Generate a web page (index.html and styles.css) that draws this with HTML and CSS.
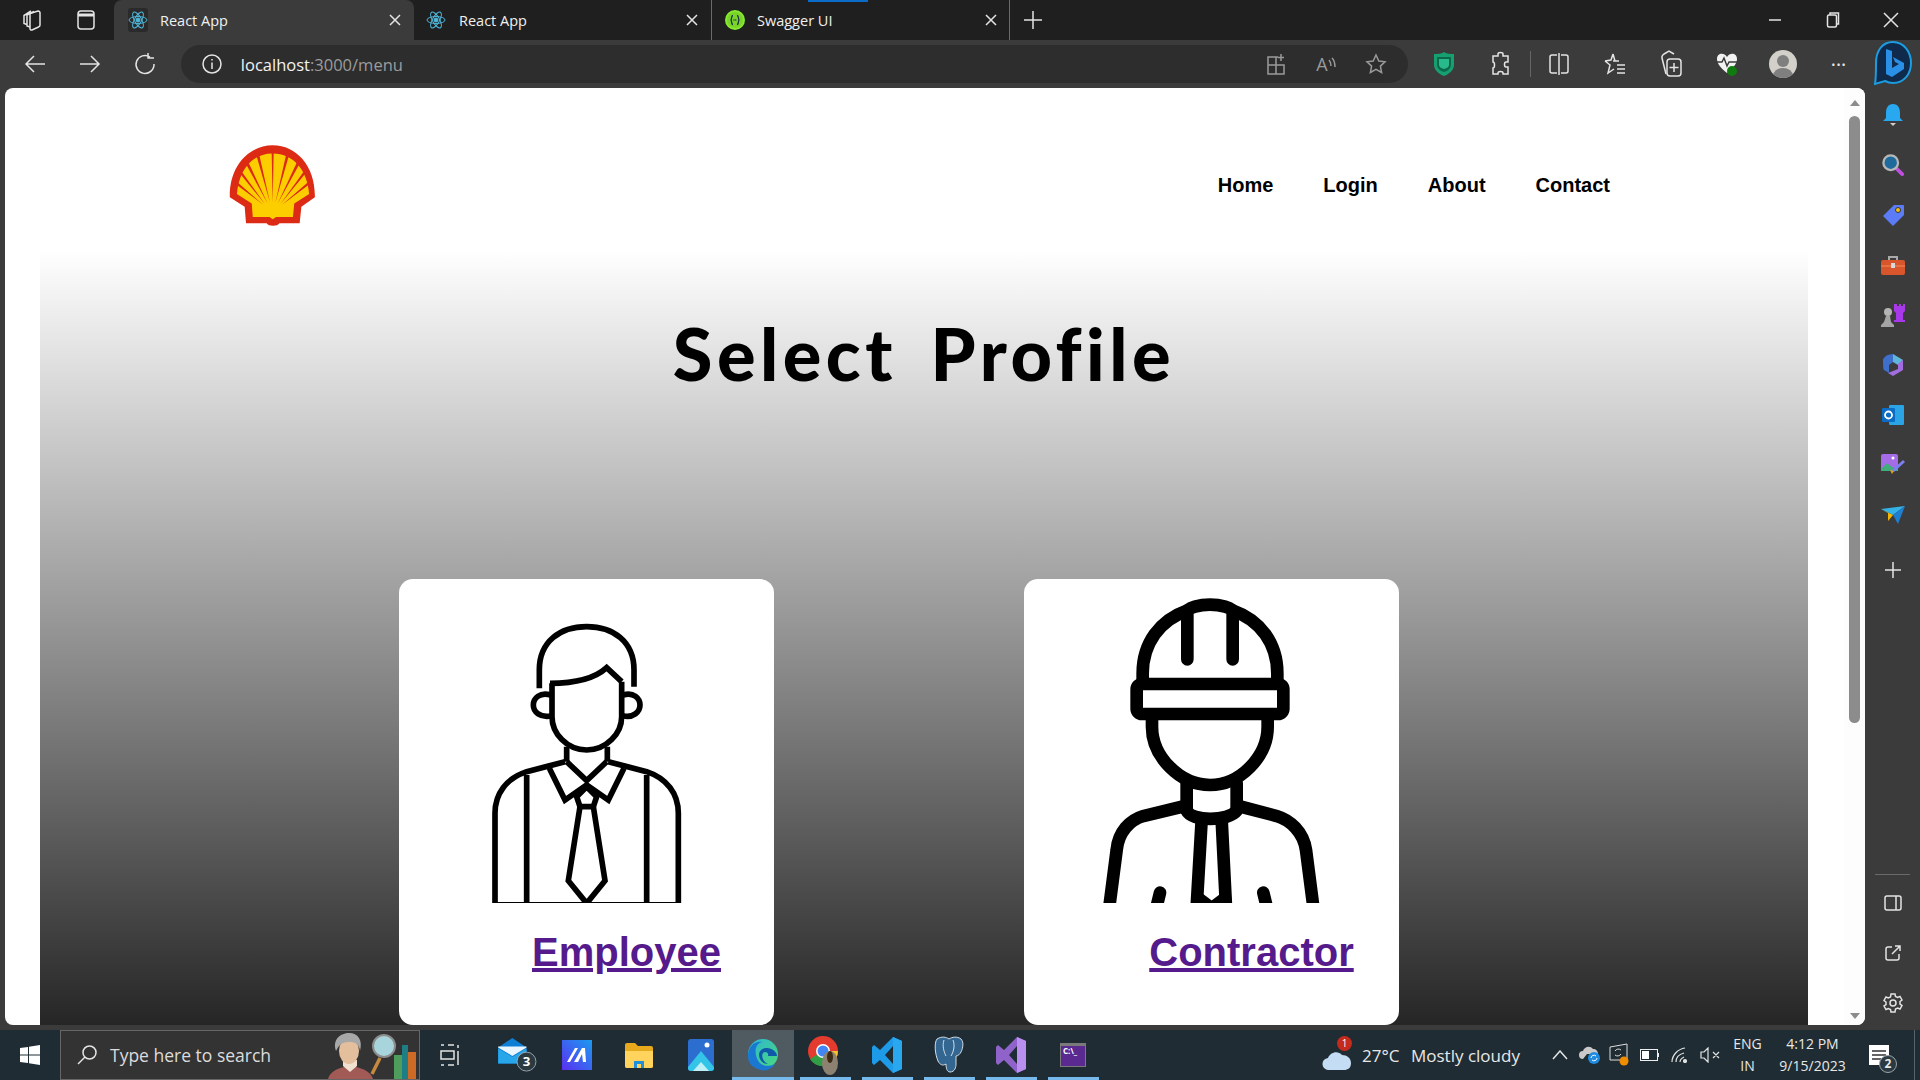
FILE: index.html
```html
<!DOCTYPE html>
<html lang="en">

<head>
    <meta charset="UTF-8">
    <title>React App</title>
    <link rel="stylesheet" href="styles.css">
</head>

<body>

    <!-- Tab strip -->
    <div class="tabbar">
        <div class="strip-btn"><svg width="22" height="22" viewBox="0 0 22 22" class="line"><path d="M9 4.500l8-2.500a2 2 0 0 1 2 1.500V16a2 2 0 0 1-1.500 2L11 21a1.500 1.500 0 0 1-2-1.500z"/><path d="M9 18l-3-1V6l7-3.500M6 15.500l-3-1V6.500L10 2"/></svg></div>
        <div class="strip-btn"><svg width="20" height="22" viewBox="0 0 20 22" class="line"><rect x="2" y="2" width="16" height="18" rx="3"/><path d="M2 6h16" stroke-width="3"/></svg></div>
        <div class="tab tab-active">
            <svg class="favicon favicon-box" viewBox="0 0 20 24"><g class="react"><circle cx="10" cy="12" r="2"/><ellipse cx="10" cy="12" rx="9" ry="3.500"/><ellipse cx="10" cy="12" rx="9" ry="3.500" transform="rotate(60 10 12)"/><ellipse cx="10" cy="12" rx="9" ry="3.500" transform="rotate(120 10 12)"/></g></svg>
            <span class="tab-title">React App</span>
            <svg class="tab-close line" width="12" height="12" viewBox="0 0 12 12"><path d="M1 1l10 10M11 1L1 11"/></svg>
        </div>
        <div class="tab tab-two">
            <svg class="favicon" viewBox="0 0 20 24"><g class="react"><circle cx="10" cy="12" r="2"/><ellipse cx="10" cy="12" rx="9" ry="3.500"/><ellipse cx="10" cy="12" rx="9" ry="3.500" transform="rotate(60 10 12)"/><ellipse cx="10" cy="12" rx="9" ry="3.500" transform="rotate(120 10 12)"/></g></svg>
            <span class="tab-title">React App</span>
            <svg class="tab-close line" width="12" height="12" viewBox="0 0 12 12"><path d="M1 1l10 10M11 1L1 11"/></svg>
        </div>
        <div class="tab tab-three">
            <div class="tab-loading"></div>
            <svg class="favicon" viewBox="0 0 20 20"><circle cx="10" cy="10" r="10" fill="#85ea2d"/><circle cx="10" cy="10" r="8" fill="#7bd32a"/><path d="M8 5.500c-2 0-1 3-2 4.500c1 .5 0 4.500 2 4.500M12 5.500c2 0 1 3 2 4.500c-1 .5 0 4.500-2 4.500" fill="none" stroke="#173647" stroke-width="1.300"/><path d="M8.500 10h3" stroke="#173647" stroke-width="1.300" stroke-dasharray="1 .8"/></svg>
            <span class="tab-title">Swagger UI</span>
            <svg class="tab-close line" width="12" height="12" viewBox="0 0 12 12"><path d="M1 1l10 10M11 1L1 11"/></svg>
        </div>
        <div class="new-tab"><svg width="20" height="20" viewBox="0 0 20 20" class="line"><path d="M10 1v18M1 10h18"/></svg></div>
        <div class="win-controls">
            <div class="win-btn"><svg width="14" height="14" viewBox="0 0 14 14" class="line"><path d="M1 7h12"/></svg></div>
            <div class="win-btn"><svg width="14" height="16" viewBox="0 0 14 16" class="line"><rect x="1.500" y="3" width="9" height="12" rx="1.500"/><path d="M4 3V1h8.500v11h-2"/></svg></div>
            <div class="win-btn"><svg width="16" height="16" viewBox="0 0 16 16" class="line"><path d="M1 1l14 14M15 1L1 15"/></svg></div>
        </div>
    </div>

    <!-- Address bar -->
    <div class="toolbar">
        <div class="tool-btn"><svg width="22" height="22" viewBox="0 0 22 22" class="line"><path d="M21 11H2M10 3l-8 8 8 8"/></svg></div>
        <div class="tool-btn"><svg width="22" height="22" viewBox="0 0 22 22" class="line"><path d="M1 11h19M12 3l8 8-8 8"/></svg></div>
        <div class="tool-btn"><svg width="22" height="24" viewBox="0 0 22 24" class="line"><path d="M16 5a9 9 0 1 0 4 7M14 1v5h6"/></svg></div>
        <div class="address">
            <div class="info-icon"><svg width="20" height="20" viewBox="0 0 20 20" class="line"><circle cx="10" cy="10" r="9"/><path d="M10 8.500V15M10 5v1.500"/></svg></div>
            <span class="url"><span class="url-host">localhost</span>:3000/menu</span>
            <div class="address-icons">
                <div class="addr-btn"><svg width="20" height="22" viewBox="0 0 20 22" class="line dim"><path d="M12 4H2v17h16V12H2M10 4v17M15 1v7M12 4.500h6"/></svg></div>
                <div class="addr-btn"><span class="read-aloud">A</span><svg width="8" height="14" viewBox="0 0 8 14" class="line dim"><path d="M1 3c2 2 2 4 2 6M4 1c3 3 3 6 3 9"/></svg></div>
                <div class="addr-btn"><svg width="22" height="22" viewBox="0 0 22 22" class="line dim"><path d="M11 2l2.800 6 6.200.800-4.600 4.300 1.200 6.400L11 16.400l-5.600 3.100 1.200-6.400L2 8.800 8.200 8z"/></svg></div>
            </div>
        </div>
        <div class="tool-right">
            <div class="ext-btn"><svg width="22" height="26" viewBox="0 0 22 26"><path d="M11 1c3 2 6 2 10 2v11c0 5-5 9-10 11C6 23 1 19 1 14V3c4 0 7 0 10-2z" fill="#15a06f"/><path d="M4 6h14v8c0 3-3 6-7 7-4-1-7-4-7-7z" fill="#0c6a4c"/><path d="M6 8h10v6c0 2-2 3-5 4-3-1-5-2-5-4z" fill="#2ab98a"/></svg></div>
            <div class="ext-btn"><svg width="20" height="26" viewBox="0 0 20 26" class="line"><path d="M8 3c0-2 5-2 5 0v2h5v6h-2c-2 0-2 5 0 5h2v7h-5v-1c0-2-5-2-5 0v1H3v-6c2 0 2-6 0-6V5h5z"/></svg></div>
            <div class="tool-sep"></div>
            <div class="ext-btn"><svg width="20" height="24" viewBox="0 0 20 24" class="line"><path d="M8 3H3a2 2 0 0 0-2 2v14a2 2 0 0 0 2 2h5M12 3h5a2 2 0 0 1 2 2v14a2 2 0 0 1-2 2h-5M10 1v22"/></svg></div>
            <div class="ext-btn"><svg width="22" height="24" viewBox="0 0 22 24" class="line"><path d="M9 2l2 7h-2 6M1 9l5 4-2 8 6-4M13 13h8M13 17h8M13 21h8M9 2L7 8 1 9"/></svg></div>
            <div class="ext-btn"><svg width="22" height="28" viewBox="0 0 22 28" class="line"><path d="M6 24L2 8c-.5-2 .5-3 2-4l5-3 5 3"/><rect x="7" y="9" width="14" height="17" rx="3"/><path d="M14 13v9M9.500 17.500h9"/></svg></div>
            <div class="ext-btn"><svg width="24" height="26" viewBox="0 0 24 26"><path d="M12 22C6 17 2 13 2 8c0-6 7-7 10-2 3-5 10-4 10 2 0 5-4 9-10 14z" fill="#f2f2f2"/><path d="M1 11h6l2-4 3 8 2-4h8" fill="none" stroke="#3b3b3b" stroke-width="1.500"/><circle cx="17" cy="20" r="5" fill="#107c10"/></svg></div>
            <div class="ext-btn"><svg width="28" height="28" viewBox="0 0 28 28"><defs><clipPath id="avatar-clip"><circle cx="14" cy="14" r="14"/></clipPath></defs><g clip-path="url(#avatar-clip)"><rect width="28" height="28" fill="#d3d0ca"/><circle cx="14" cy="11" r="6" fill="#7f7f7f"/><ellipse cx="14" cy="26" rx="10" ry="8" fill="#7f7f7f"/></g></svg></div>
            <div class="ext-btn"><span class="dots">&#8226;&#8226;&#8226;</span></div>
            <div class="bing-btn"><svg width="38" height="46" viewBox="0 0 38 46"><path d="M19 1C8 1 2 10 2 22c0 7 0 15-1 21l10-3c2 1 5 2 8 2 11 0 18-9 18-20S30 1 19 1z" fill="#102a4c" stroke="#1b9de2" stroke-width="2"/><path d="M12 8l6 2v17l7-4-4-2-2-5 11 6v6l-12 8-6-3z" fill="#2a8fe6"/></svg></div>
        </div>
    </div>

    <div class="middle">
        <div class="page">
            <div class="page-scroll">

                <div class="header">
                    <a class="logo" href="#">
                        <svg width="86" height="81" viewBox="85 45 252 240">
                            <path d="M213 46C140 46 84 110 86 200l44 28 4 49h61c5 10 33 10 38 0h60l5-49 40-28C340 110 285 46 213 46z" fill="#dd2a15"/>
                            <path d="M213 70c-62 0-100 50-106 120l44 28 3 40h50l9 7 10-7h50l4-40 44-28c-5-70-46-120-108-120z" fill="#fcce00"/>
                            <path d="M213 215l-3-146h6zM205 215L172 68l-8 5zM198 218L136 85l-8 6zM190 220L115 115l-5 7zM185 222l-78-68-1 9zM221 215l33-147 8 5zM228 218l62-133 8 6zM236 220l75-105 5 7zM241 222l78-68 1 9z" fill="#dd2a15"/>
                        </svg>
                    </a>
                    <div class="nav">
                        <a href="#">Home</a>
                        <a href="#">Login</a>
                        <a href="#">About</a>
                        <a href="#">Contact</a>
                    </div>
                </div>

                <div class="menu-section">
                    <h1>Select Profile</h1>
                    <div class="profile-row">
                        <div class="profile-card">
                            <svg class="profile-img" viewBox="27 27 1125 972">
                                <g class="outline-thin">
                                    <path d="M448 355V300C448 215 510 170 590 170S732 215 732 300V350"/>
                                    <path d="M480 340C550 340 610 330 650 293L695 335"/>
                                    <path d="M486 340V440C486 490 530 540 590 540S695 490 695 440V335"/>
                                    <path d="M482 375C450 365 430 385 430 405S450 445 486 437"/>
                                    <path d="M700 375C730 365 750 385 750 405S730 445 698 437"/>
                                    <path d="M530 530V575M652 530V575"/>
                                    <path d="M525 575L410 605C350 625 315 670 315 730V1010"/>
                                    <path d="M655 575L770 605C830 625 865 670 865 730V1010"/>
                                    <path d="M410 615V1010M770 615V1010"/>
                                    <path d="M530 575L590 632L650 575"/>
                                    <path d="M478 595L525 690L590 645L655 690L702 595"/>
                                    <path d="M590 650L620 680L610 710H570L560 680Z"/>
                                    <path d="M570 710L535 932L590 1000L645 932L610 710"/>
                                    <path d="M310 998H870" stroke-width="4"/>
                                </g>
                            </svg>
                            <a class="profile-link" href="#">Employee</a>
                        </div>
                        <div class="profile-card">
                            <svg class="profile-img" viewBox="42 27 1125 972">
                                <g class="outline-thick">
                                    <path d="M398 340V310C398 220 450 150 530 122M802 340V310C802 220 750 150 670 122"/>
                                    <path d="M532 268V125C532 112 570 104 600 104S668 112 668 125V268"/>
                                    <rect x="380" y="342" width="440" height="90" rx="16"/>
                                    <path d="M426 440V470C426 560 510 645 600 645S773 560 773 470V440"/>
                                    <path d="M530 640V720M680 640V720"/>
                                    <path d="M530 722C545 755 655 755 680 722"/>
                                    <path d="M525 708L400 738C360 750 325 785 320 840L298 1010"/>
                                    <path d="M685 708L800 738C840 750 880 785 888 840L910 1010"/>
                                    <path d="M575 750L560 1010M635 750L648 1010"/>
                                    <path d="M450 968L435 1030M760 968L775 1030"/>
                                    <path d="M565 985L605 1015L645 985"/>
                                </g>
                            </svg>
                            <a class="profile-link" href="#">Contractor</a>
                        </div>
                    </div>
                </div>

            </div>
            <div class="scrollbar">
                <div class="arrow-up"></div>
                <div class="thumb"></div>
                <div class="arrow-down"></div>
            </div>
        </div>

        <!-- Edge sidebar -->
        <div class="sidebar">
            <div class="side-btn"><svg width="20" height="24" viewBox="0 0 20 24"><path d="M10 1c5 0 7 4 7 9v5l3 3H0l3-3v-5c0-5 2-9 7-9z" fill="#27a8f0"/><path d="M7 20h6l-3 3z" fill="#cfcfcf"/></svg></div>
            <div class="side-btn"><svg width="22" height="22" viewBox="0 0 24 24"><path d="M15 15l7 7" stroke="#c04ee0" stroke-width="4" stroke-linecap="round"/><circle cx="9.500" cy="9.500" r="8" fill="#1e6a9c" stroke="#b7b7b7" stroke-width="2.500"/></svg></div>
            <div class="side-btn"><svg width="22" height="22" viewBox="0 0 22 22"><path d="M12 1h9a1 1 0 0 1 1 1v9L11 22 1 12z" fill="#5b7cf6"/><circle cx="16" cy="6" r="2.500" fill="#f4c20d" stroke="#333"/></svg></div>
            <div class="side-btn"><svg width="24" height="20" viewBox="0 0 24 20"><path d="M8 5V2h8v3" fill="none" stroke="#a9a9a9" stroke-width="2"/><rect y="5" width="24" height="15" rx="2" fill="#d9562c"/><path d="M0 11h24" stroke="#f08a5d"/><rect x="10" y="8" width="4" height="5" fill="#d8d8d8"/></svg></div>
            <div class="side-btn"><svg width="24" height="24" viewBox="0 0 24 24"><path d="M13 1h3v2h2V1h2v2h2V1h2v7l-2 2v7h2v2H13v-2h2v-7l-2-2z" fill="#a839e8"/><circle cx="7" cy="9" r="4" fill="#b4b4b4"/><path d="M5 13h4l1 6 3 3v2H0v-2l3-3z" fill="#a4a4a4"/></svg></div>
            <div class="side-btn"><svg width="22" height="24" viewBox="0 0 22 24"><path d="M11 1l10 6-5 5-5-3z" fill="#5fb6d8"/><path d="M21 7v10l-10 6-5-3 10-4v-5z" fill="#a36de0"/><path d="M1 7c0-2 4-6 10-6v8l-4 3v8l-5-3C1 16 1 10 1 7z" fill="#3e6fcb"/></svg></div>
            <div class="side-btn"><svg width="22" height="22" viewBox="0 0 22 22"><rect x="7" y="1" width="15" height="20" rx="1" fill="#2aa4e4"/><rect y="4" width="13" height="14" rx="1" fill="#0a6cc4"/><circle cx="6.500" cy="11" r="3.500" fill="none" stroke="#fff" stroke-width="1.800"/></svg></div>
            <div class="side-btn"><svg width="26" height="24" viewBox="0 0 26 24"><rect x="1" y="1" width="17" height="17" rx="2" fill="#a66be6"/><path d="M1 16l6-6 5 4 6 2v2H1z" fill="#3fae7a"/><circle cx="13" cy="5" r="1.500" fill="#fff"/><path d="M13 18L24 8" stroke="#7c7ff0" stroke-width="3"/><path d="M10 17l4 1-2 3z" fill="#e6a21a"/></svg></div>
            <div class="side-btn"><svg width="24" height="18" viewBox="0 0 24 18"><path d="M0 3l24-3-12 9z" fill="#34b3e8"/><path d="M24 0l-7 18-5-9z" fill="#1e7fd0"/><path d="M0 3l7 4 0 8 5-6z" fill="#f4b400"/></svg></div>
            <div class="side-btn side-plus"><svg width="16" height="16" viewBox="0 0 16 16" class="line"><path d="M8 0v16M0 8h16"/></svg></div>
            <div class="side-spacer"></div>
            <div class="side-divider"></div>
            <div class="side-btn"><svg width="18" height="16" viewBox="0 0 18 16" class="line"><rect x="1" y="1" width="16" height="14" rx="2"/><path d="M12 1v14"/></svg></div>
            <div class="side-btn"><svg width="16" height="16" viewBox="0 0 16 16" class="line"><path d="M7 2H3a2 2 0 0 0-2 2v9a2 2 0 0 0 2 2h9a2 2 0 0 0 2-2V9M7 9l8-8M10 1h5v5"/></svg></div>
            <div class="side-btn"><svg width="20" height="20" viewBox="0 0 20 20" class="line"><circle cx="10" cy="10" r="3"/><path d="M8 1h4l.500 2.500 2.200 1 2.300-1 2 3.500-2 1.500v2.500l2 1.500-2 3.500-2.300-1-2.200 1L12 19H8l-.500-2.500-2.200-1-2.300 1-2-3.500 2-1.500V9L1 7.500 3 4l2.300 1 2.200-1z"/></svg></div>
        </div>
    </div>

    <!-- Windows taskbar -->
    <div class="taskbar">
        <div class="start"><svg width="20" height="20" viewBox="0 0 20 20"><path d="M0 3l8-1v7.500H0zM9 1.800L20 0v9.500H9zM0 10.500h8V18l-8-1zM9 10.500h11V20L9 18.200z" fill="#fff"/></svg></div>
        <div class="search-box">
            <svg width="20" height="20" viewBox="0 0 20 20" class="line"><circle cx="12.500" cy="7.500" r="6.500"/><path d="M8 12l-7 7"/></svg>
            <span class="search-text">Type here to search</span>
            <svg class="search-art" width="88" height="48" viewBox="0 0 88 48">
                <path d="M0 48c2-7 8-10 16-12h12c8 2 15 5 17 12z" fill="#a25a57"/>
                <path d="M15 35l7 6 7-6v-6H15z" fill="#f0e0d0"/>
                <ellipse cx="21" cy="20" rx="10" ry="13" fill="#e3bf9d"/>
                <path d="M8 20C4 8 13 2 21 2c9 0 14 7 11 18-1-7-4-9-11-9s-10 3-13 9z" fill="#a8a8a8"/>
                <circle cx="56" cy="15" r="11" fill="#a8d5dc" stroke="#8c8c8c" stroke-width="2"/>
                <path d="M52 27l-8 16" stroke="#c58a3d" stroke-width="3.500"/>
                <rect x="66" y="24" width="8" height="24" fill="#4e9d5d"/>
                <rect x="74" y="14" width="6" height="34" fill="#1d7f85"/>
                <rect x="80" y="21" width="8" height="27" fill="#cc6a26"/>
            </svg>
        </div>
        <div class="task-view"><svg width="20" height="22" viewBox="0 0 20 22" class="line"><path d="M1 1h3M8 1h6M1 7h13v8H1zM1 21h3M8 21h6M18 1v3M18 7v14"/></svg></div>

        <div class="app app-mail"><svg width="40" height="34" viewBox="0 0 42 36"><path d="M0 10L15 0l15 10v17H0z" fill="#0f7fd6"/><path d="M0 10l15 9 15-9v-1H0z" fill="#eaf6ff"/><path d="M0 11l15 9 15-9v16H0z" fill="#27a6ea"/><circle cx="30" cy="25" r="10" fill="#2b3a41" stroke="#9aa5aa"/><text x="30" y="30" class="count">3</text></svg></div>
        <div class="app"><svg width="30" height="30" viewBox="0 0 30 30"><defs><linearGradient id="ma-grad" x1="0" y1="1" x2="1" y2="0"><stop offset="0" stop-color="#5b2ff0"/><stop offset="1" stop-color="#1b9bf0"/></linearGradient></defs><rect width="30" height="30" fill="url(#ma-grad)"/><path d="M5 22l8-14h3l-8 14zM12 22l8-14h3l1 14h-3l-1-8-4 8z" fill="#fff"/></svg></div>
        <div class="app"><svg width="28" height="26" viewBox="0 0 28 26"><path d="M0 3a2 2 0 0 1 2-2h8l3 3h13a2 2 0 0 1 2 2v18a2 2 0 0 1-2 2H2a2 2 0 0 1-2-2z" fill="#e8a91d"/><path d="M0 9h28v15a2 2 0 0 1-2 2H2a2 2 0 0 1-2-2z" fill="#ffd35c"/><path d="M9 26v-7h10v7h-3v-4h-4v4z" fill="#1f8fd8"/></svg></div>
        <div class="app"><svg width="26" height="32" viewBox="0 0 26 32"><rect width="26" height="32" rx="3" fill="#2c6ed0"/><circle cx="19" cy="6" r="2.500" fill="#fff"/><path d="M0 28L13 12l13 16v1a3 3 0 0 1-3 3H3a3 3 0 0 1-3-3z" fill="#34c4e8"/><path d="M5 32l8-9 8 9z" fill="#bff0f8"/></svg></div>
        <div class="app app-active"><svg width="32" height="34" viewBox="0 0 32 34"><defs><linearGradient id="edge-grad" x1="0" y1="0" x2="1" y2="1"><stop offset="0" stop-color="#2cb6d4"/><stop offset="1" stop-color="#4ad97a"/></linearGradient></defs><circle cx="16" cy="16" r="15" fill="url(#edge-grad)"/><path d="M1 18c0-10 7-15 14-14-8 2-8 13-3 20 3 4 10 5 16 2-4 6-11 8-17 5C5 29 1 25 1 18z" fill="#1a78d2"/><path d="M12 17c0-5 4-7 8-7 5 0 10 4 10 8h-9c1-4-3-5-5-3-2 3 0 9 5 11-5 0-9-4-9-9z" fill="#0f5aa8"/></svg></div>
        <div class="app"><svg width="34" height="40" viewBox="0 0 34 40"><circle cx="15" cy="16" r="15" fill="#e33b2e"/><path d="M15 16L2 24a15 15 0 0 0 19 6z" fill="#2f9e44"/><path d="M15 16h15a15 15 0 0 1-9 14z" fill="#f9c22e"/><circle cx="15" cy="16" r="7" fill="#fff"/><circle cx="15" cy="16" r="5.500" fill="#4285f4"/><ellipse cx="22" cy="28" rx="8" ry="12" fill="#8d8272"/><ellipse cx="22" cy="22" rx="3" ry="6" fill="#3d2a14"/></svg></div>
        <div class="app"><svg width="30" height="36" viewBox="0 0 30 36"><path d="M21 0l9 4v28l-9 4-13-13-6 5-2-2V10l2-2 6 5zM21 9l-8 9 8 9z" fill="#1e9be8"/><path d="M21 0l9 4v28l-9 4z" fill="#2aa8ef"/></svg></div>
        <div class="app"><svg width="30" height="38" viewBox="0 0 30 38"><path d="M3 3c5-3 9-2 12 0 3-2 8-3 12 0 3 3 2 9 0 13-1 2-3 4-5 4v8c0 3-1 8-6 8-3 0-4-4-4-8-3 2-6 1-8-3C1 18 0 7 3 3z" fill="#336791" stroke="#d5dee6"/><path d="M10 4c-2 6 0 12 2 16M19 4c2 5 1 11-2 16" fill="none" stroke="#d5dee6"/></svg></div>
        <div class="app"><svg width="30" height="36" viewBox="0 0 30 36"><path d="M21 0l9 4v28l-9 4-13-13-6 5-2-2V10l2-2 6 5zM21 9l-8 9 8 9z" fill="#8f63c9"/><path d="M21 0l9 4v28l-9 4z" fill="#b98ff0"/></svg></div>
        <div class="app"><div class="cmd-icon"><span class="cmd-text">C:\_</span></div></div>

        <div class="tray">
            <div class="weather-icon">
                <svg width="30" height="22" viewBox="0 0 30 22"><path d="M7 22a6 6 0 0 1-1-12c2-6 10-8 14-3 5 0 9 3 9 8s-3 7-7 7z" fill="#c4dcf4"/></svg>
                <span class="weather-badge">1</span>
            </div>
            <div class="weather-text"><span class="temp">27°C</span><span>Mostly cloudy</span></div>
            <div class="tray-icon"><svg width="16" height="10" viewBox="0 0 16 10" class="line"><path d="M1 9l7-8 7 8"/></svg></div>
            <div class="tray-icon"><svg width="22" height="20" viewBox="0 0 22 20"><path d="M4 14a4 4 0 0 1 0-8c1-4 7-6 10-2 3 0 5 2 5 5H8z" fill="#c9c9c9"/><circle cx="15" cy="13" r="6" fill="#1f8be0"/><path d="M12 13a3 3 0 0 1 5-2M18 13a3 3 0 0 1-5 2" fill="none" stroke="#fff"/></svg></div>
            <div class="tray-icon"><svg width="22" height="24" viewBox="0 0 22 24"><path d="M1 4l17-3v16H1z" fill="none" stroke="#ddd"/><path d="M6 8a4 4 0 0 1 6-1M12 11a4 4 0 0 1-6 1" fill="none" stroke="#ddd"/><circle cx="15" cy="18" r="4.500" fill="#f08c00"/></svg></div>
            <div class="tray-icon"><svg width="20" height="12" viewBox="0 0 20 12"><rect x=".500" y=".500" width="17" height="11" fill="none" stroke="#eee"/><rect x="2" y="2" width="7" height="8" fill="#fff"/><path d="M18.500 4v4" stroke="#eee"/></svg></div>
            <div class="tray-icon"><svg width="18" height="16" viewBox="0 0 18 16" class="line thin"><path d="M1 15C1 8 7 2 14 1M5 15c0-5 4-8 8-9M9 15c0-2 2-4 4-5"/><circle cx="14" cy="14" r="1.500" fill="#ddd"/></svg></div>
            <div class="tray-icon"><svg width="20" height="16" viewBox="0 0 20 16" class="line thin"><path d="M1 5h3l4-4v14l-4-4H1zM13 5l6 6M19 5l-6 6"/></svg></div>
            <div class="lang"><span>ENG</span><span>IN</span></div>
            <div class="clock"><span>4:12 PM</span><span>9/15/2023</span></div>
            <div class="notify">
                <svg width="20" height="20" viewBox="0 0 20 20"><path d="M0 0h20v20H0z" fill="#fff"/><path d="M3 6h14M3 10h14M3 14h9" stroke="#333" stroke-width="1.300"/></svg>
                <span class="notify-badge">2</span>
            </div>
            <div class="show-desktop"></div>
        </div>
    </div>

</body>

</html>
```

FILE: styles.css
```css
* {
    box-sizing: border-box;
}

html,
body {
    margin: 0;
    padding: 0;
    height: 1080px;
    overflow: hidden;
}

body {
    display: flex;
    flex-direction: column;
    width: 1920px;
    background-color: #3b3b3b;
    font-family: "Open Sans", "Noto Sans", sans-serif;
}

svg {
    display: block;
    flex-shrink: 0;
}

.line {
    fill: none;
    stroke: #e4e4e4;
    stroke-width: 1.5;
}

.line.dim {
    stroke: #9a9a9a;
}

.line.thin {
    stroke-width: 1.2;
}

/* Tab strip */
.tabbar {
    display: flex;
    height: 40px;
    padding-left: 5px;
    background-color: #1f1f1f;
    color: #f0f0f0;
    font-size: 14.5px;
}

.strip-btn {
    display: flex;
    align-items: center;
    justify-content: center;
    width: 54px;
}

.tab {
    position: relative;
    display: flex;
    align-items: center;
    width: 298px;
    padding: 0 12px;
}

.tab-active {
    width: 300px;
    margin-left: 1px;
    padding: 0 13px 0 14px;
    background-color: #3b3b3b;
    border-radius: 8px 8px 0 0;
}

.tab-two {
    padding-right: 13px;
    border-right: 1px solid #6a6a6a;
}

.tab-two .tab-title {
    margin-left: 13px;
}

.tab-three {
    padding-left: 13px;
    border-right: 1px solid #6a6a6a;
}

.tab-loading {
    position: absolute;
    top: 0;
    left: 96px;
    width: 60px;
    height: 2px;
    background-color: #0a6cc8;
}

.favicon {
    width: 20px;
    height: 24px;
}

.favicon-box {
    background-color: #2a2a2a;
    border-radius: 3px;
}

.react {
    fill: none;
    stroke: #4fb6d8;
    stroke-width: 1;
}

.react circle {
    fill: #4fb6d8;
}

.tab-title {
    margin-left: 12px;
}

.tab-close {
    margin-left: auto;
}

.new-tab {
    display: flex;
    align-items: center;
    justify-content: center;
    width: 46px;
}

.win-controls {
    display: flex;
    margin-left: auto;
}

.win-btn {
    display: flex;
    align-items: center;
    justify-content: center;
    width: 58px;
}

/* Address bar */
.toolbar {
    display: flex;
    height: 48px;
    padding-left: 8px;
    background-color: #3b3b3b;
}

.tool-btn {
    display: flex;
    align-items: center;
    justify-content: center;
    width: 55px;
}

.address {
    display: flex;
    align-items: center;
    width: 1228px;
    height: 38px;
    margin: 5px 0 0 8px;
    padding: 0 7px 0 11px;
    background-color: #2d2d2d;
    border-radius: 19px;
}

.info-icon {
    display: flex;
    justify-content: center;
    width: 40px;
}

.url {
    margin-left: 9px;
    color: #9c9c9c;
    font-size: 16.5px;
}

.url-host {
    color: #f2f2f2;
}

.address-icons {
    display: flex;
    margin-left: auto;
}

.addr-btn {
    display: flex;
    align-items: center;
    justify-content: center;
    width: 50px;
}

.read-aloud {
    color: #9a9a9a;
    font-size: 18px;
}

.tool-right {
    display: flex;
    margin-left: 8px;
}

.ext-btn {
    display: flex;
    align-items: center;
    justify-content: center;
    width: 56px;
}

.tool-sep {
    width: 1px;
    height: 26px;
    margin: 11px 0 0 2px;
    background-color: #666;
}

.dots {
    color: #e4e4e4;
    font-size: 11px;
    letter-spacing: 1px;
}

.bing-btn {
    display: flex;
    align-items: center;
    justify-content: center;
    width: 53px;
}

/* Browser body */
.middle {
    display: flex;
    height: 942px;
    padding-left: 5px;
}

.page {
    display: flex;
    width: 1860px;
    height: 937px;
    background-color: #fff;
    border-radius: 8px;
    overflow: hidden;
}

.page-scroll {
    width: 1839px;
    overflow: hidden;
}

.header {
    display: flex;
    align-items: center;
    height: 162px;
    padding: 32px 234px 0 224px;
}

.logo {
    display: block;
}

.nav {
    display: flex;
    gap: 50px;
    margin-left: auto;
}

.nav a {
    color: #000;
    font-family: "Liberation Sans", Arial, sans-serif;
    font-size: 20px;
    font-weight: bold;
    text-decoration: none;
}

.menu-section {
    width: 1768px;
    height: 910px;
    margin-left: 35px;
    padding-top: 60px;
    background: linear-gradient(#fff, #000);
}

.menu-section h1 {
    margin: 0;
    color: #000;
    font-family: "Lato", sans-serif;
    font-size: 72px;
    font-weight: 900;
    line-height: 86px;
    letter-spacing: 4.5px;
    word-spacing: 12px;
    text-align: center;
}

.profile-row {
    display: flex;
    gap: 250px;
    margin: 183px 0 0 359px;
}

.profile-card {
    width: 375px;
    height: 446px;
    background-color: #fff;
    border-radius: 14px;
}

.profile-img {
    width: 375px;
    height: 324px;
    fill: none;
    stroke: #000;
    overflow: hidden;
}

.outline-thin {
    stroke-width: 17;
}

.outline-thick {
    stroke-width: 38;
    stroke-linecap: round;
}

.profile-link {
    display: block;
    margin-top: 26px;
    padding-left: 80px;
    color: #551a8b;
    font-family: "Liberation Sans", Arial, sans-serif;
    font-size: 40px;
    font-weight: bold;
    line-height: 46px;
    text-align: center;
    text-decoration: underline;
}

/* Scrollbar */
.scrollbar {
    display: flex;
    flex-direction: column;
    align-items: center;
    width: 21px;
    padding: 12px 0 6px;
    background-color: #fdfdfd;
}

.arrow-up,
.arrow-down {
    width: 0;
    height: 0;
    border-left: 5px solid transparent;
    border-right: 5px solid transparent;
}

.arrow-up {
    border-bottom: 6px solid #8c8c8c;
}

.arrow-down {
    margin-top: auto;
    border-top: 6px solid #8c8c8c;
}

.thumb {
    width: 11px;
    height: 607px;
    margin-top: 10px;
    background-color: #8c8c8c;
    border-radius: 6px;
}

/* Sidebar */
.sidebar {
    display: flex;
    flex-direction: column;
    align-items: center;
    width: 55px;
    padding: 2px 0;
}

.side-btn {
    display: flex;
    align-items: center;
    justify-content: center;
    flex-shrink: 0;
    width: 100%;
    height: 50px;
}

.side-plus {
    margin-top: 5px;
}

.side-spacer {
    flex: 1;
}

.side-divider {
    width: 35px;
    height: 1px;
    flex-shrink: 0;
    margin-bottom: 3px;
    background-color: #6a6a6a;
}

/* Taskbar */
.taskbar {
    display: flex;
    height: 50px;
    background-color: #1f2c33;
    color: #e8e8e8;
}

.start {
    display: flex;
    align-items: center;
    justify-content: center;
    width: 60px;
}

.search-box {
    display: flex;
    align-items: center;
    width: 360px;
    padding: 0 3px 0 16px;
    background-color: #333;
    border: 1px solid #666;
}

.search-text {
    margin-left: 13px;
    color: #dcdcdc;
    font-size: 17.5px;
    white-space: nowrap;
}

.search-art {
    margin-left: auto;
}

.task-view {
    display: flex;
    align-items: center;
    justify-content: center;
    width: 60px;
    margin-right: 4px;
}

.app {
    display: flex;
    align-items: center;
    justify-content: center;
    width: 51px;
    margin: 0 5.5px;
    border-bottom: 3px solid #76b9ed;
    padding-top: 3px;
}

.app:nth-child(4),
.app:nth-child(5),
.app:nth-child(6),
.app:nth-child(7) {
    border-bottom-color: transparent;
}

.app-mail svg {
    margin-left: 6px;
}

.app-active {
    width: 62px;
    margin: 0;
    background-color: #4f5b60;
}

.count {
    fill: #fff;
    font-size: 14px;
    font-weight: bold;
    text-anchor: middle;
}

.cmd-icon {
    width: 26px;
    height: 24px;
    padding-left: 2px;
    background-color: #5b2a91;
    border: 1px solid #7a7a7a;
    border-top-width: 3px;
}

.cmd-text {
    display: block;
    color: #fff;
    font-size: 8px;
    font-weight: bold;
    line-height: 9px;
}

.tray {
    display: flex;
    align-items: center;
    margin-left: auto;
    width: 600px;
    height: 100%;
}

.weather-icon {
    position: relative;
    display: flex;
    justify-content: center;
    width: 34px;
    margin-right: 8px;
    padding-top: 8px;
}

.weather-badge {
    position: absolute;
    top: -4px;
    left: 17px;
    width: 15px;
    height: 15px;
    background-color: #c42b1c;
    border-radius: 50%;
    color: #fff;
    font-size: 10px;
    line-height: 15px;
    text-align: center;
}

.weather-text {
    width: 183px;
    font-size: 17px;
    white-space: nowrap;
}

.temp {
    display: inline-block;
    width: 49px;
}

.tray-icon {
    display: flex;
    align-items: center;
    justify-content: center;
    width: 30px;
}

.lang,
.clock {
    display: flex;
    flex-direction: column;
    gap: 2px;
    align-items: center;
    font-size: 14px;
    line-height: 20px;
}

.lang {
    width: 45px;
}

.clock {
    width: 85px;
}

.notify {
    position: relative;
    display: flex;
    justify-content: center;
    width: 48px;
}

.notify-badge {
    position: absolute;
    top: 10px;
    left: 24px;
    width: 18px;
    height: 18px;
    background-color: #2b3a41;
    border: 1px solid #9aa5aa;
    border-radius: 50%;
    font-size: 12px;
    font-weight: bold;
    line-height: 16px;
    text-align: center;
}

.show-desktop {
    width: 1px;
    height: 100%;
    margin-left: 11px;
    background-color: #5a6468;
}
```
